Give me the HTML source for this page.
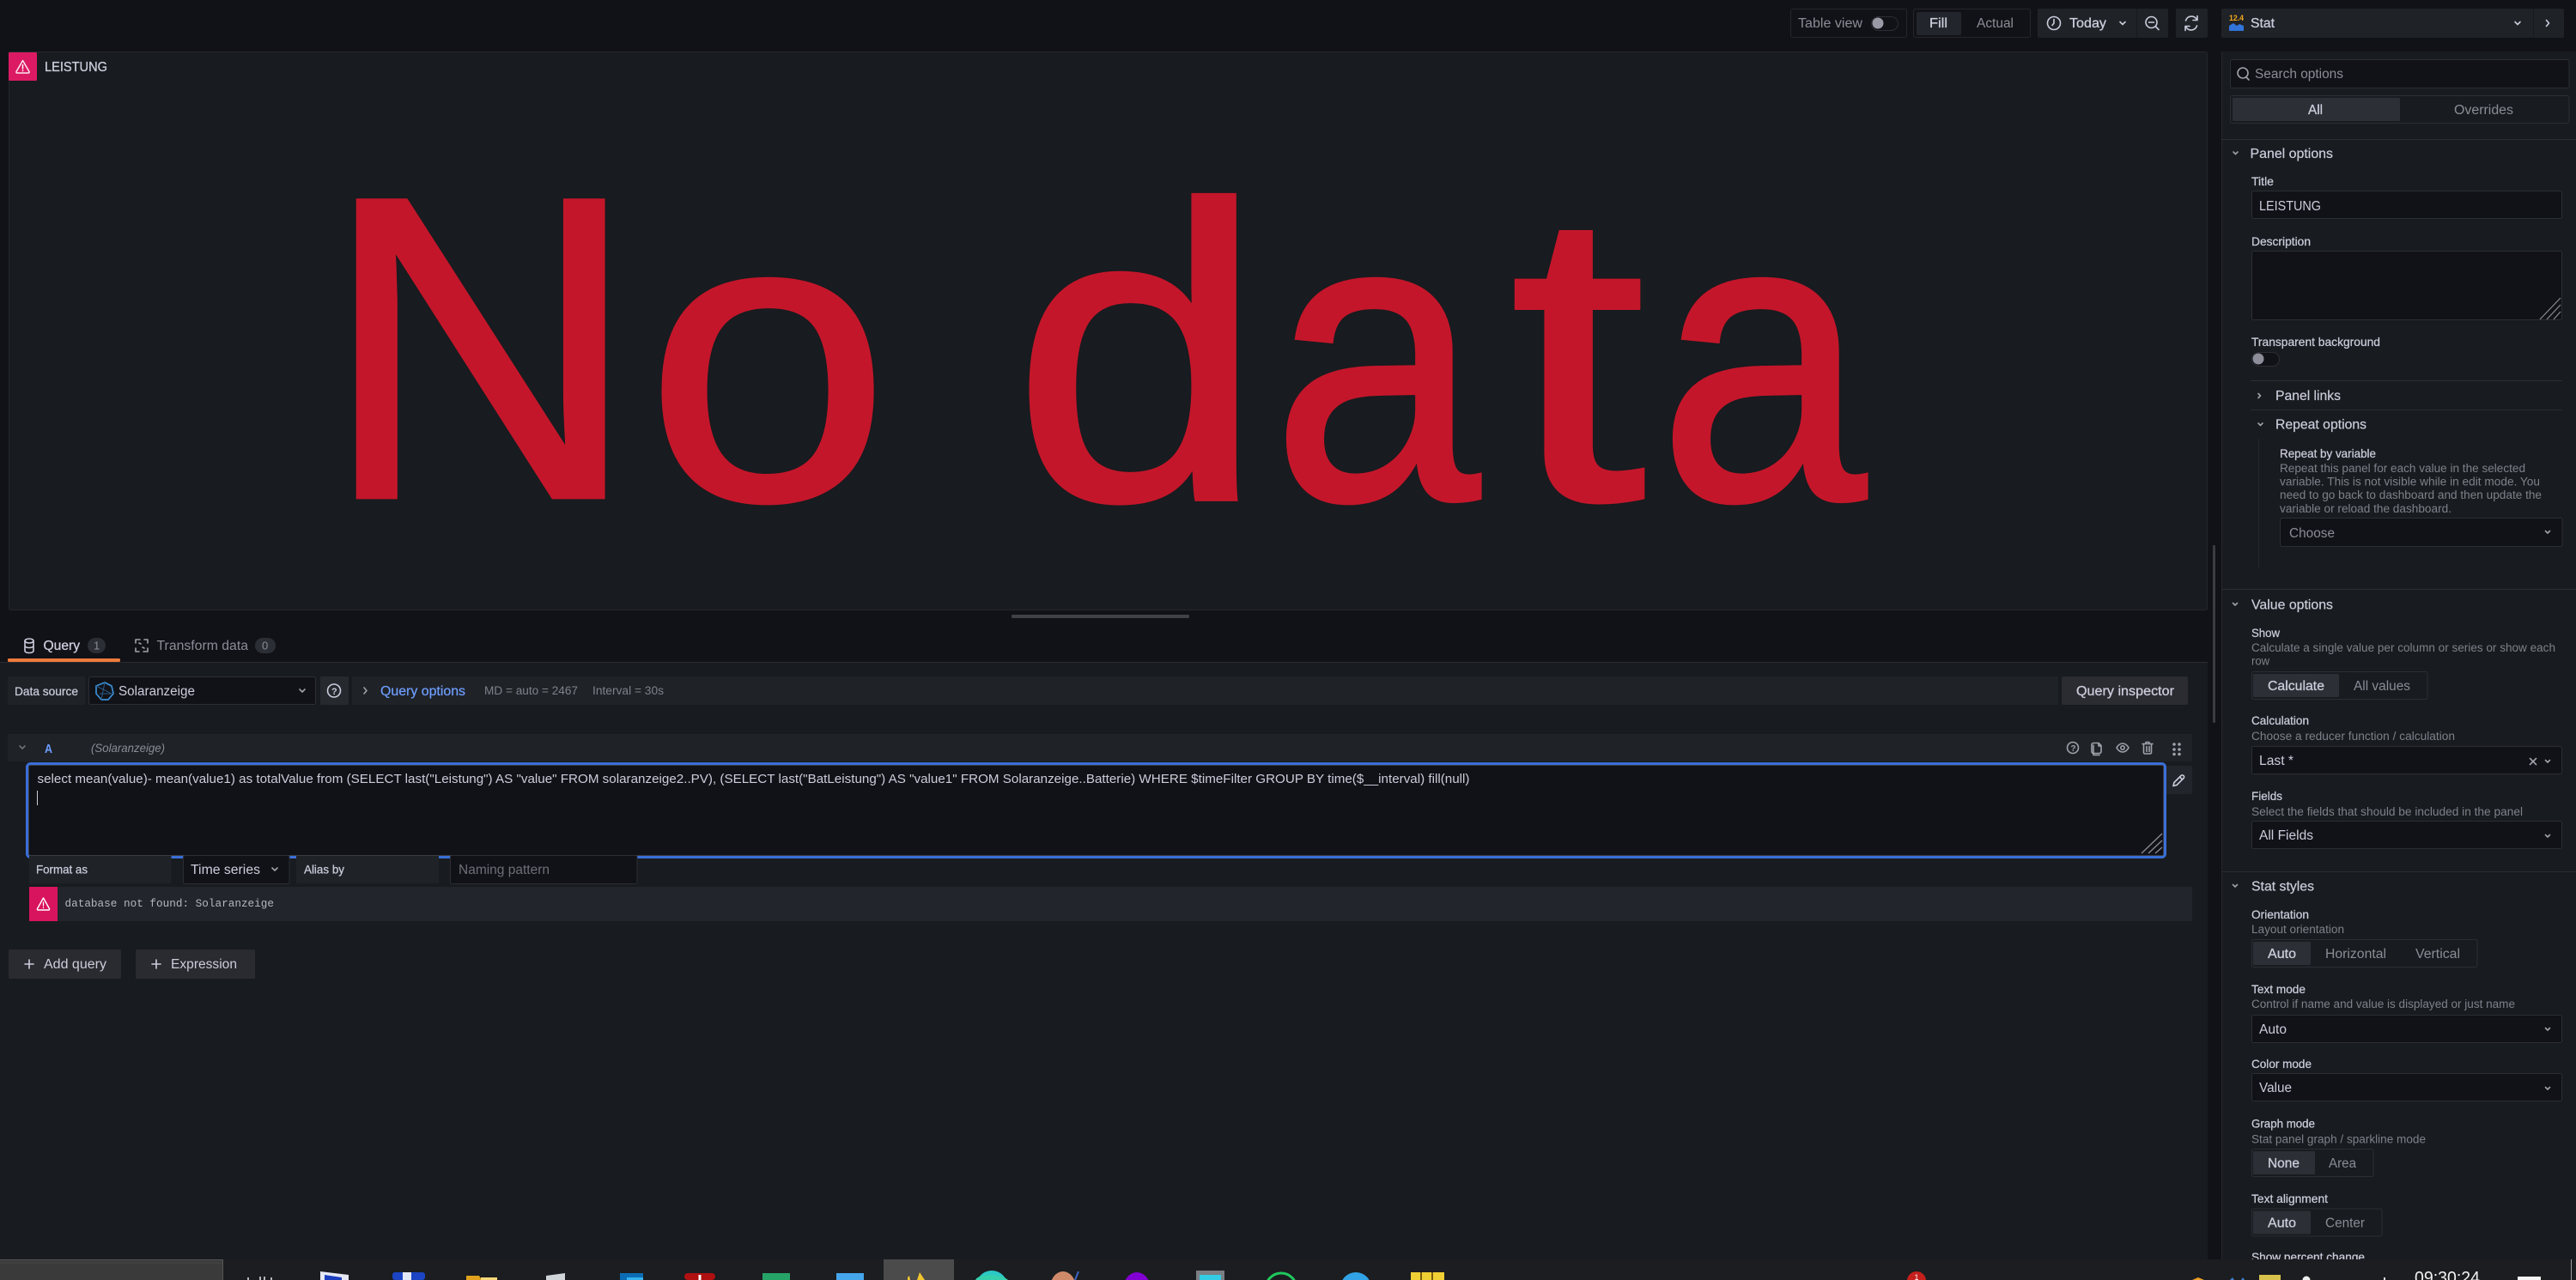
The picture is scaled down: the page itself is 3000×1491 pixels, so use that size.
<!DOCTYPE html>
<html lang="en">
<head>
<meta charset="utf-8">
<title>Edit panel - LEISTUNG</title>
<style>
html,body{margin:0;padding:0;width:3000px;height:1491px;overflow:hidden;background:#111217}
svg{display:block;position:absolute;left:0;top:0}
text{font-family:"Liberation Sans",Arial,sans-serif;fill:#ccccdc;font-size:15.5px;white-space:pre}
.s{fill:#8b8c97}
.l{font-size:14px;fill:#ccccdc;stroke:#ccccdc;stroke-width:.25px}
.d{font-size:13.5px;fill:#7f818b}
.h{font-size:16px;stroke:#ccccdc;stroke-width:.2px}
.b{stroke:#ccccdc;stroke-width:.3px}
.m{font-family:"Liberation Mono",monospace;font-size:12.7px;fill:#b5b6c2}
.i{fill:none;stroke:#ccccdc;stroke-width:1.6;stroke-linecap:round;stroke-linejoin:round}
.g{fill:none;stroke:#a0a1ab;stroke-width:1.6;stroke-linecap:round;stroke-linejoin:round}
.p{fill:#111217;stroke:#2b2e34;stroke-width:1}
.nd{font-size:516px;fill:#c4162a;stroke:#c4162a;stroke-width:6px;stroke-linejoin:miter}
</style>
</head>
<body>
<svg width="3000" height="1491" viewBox="0 0 3000 1491" xmlns="http://www.w3.org/2000/svg">
<rect width="3000" height="1491" fill="#111217"/>

<!-- toolbar -->
<rect x="2085.5" y="10.5" width="135" height="33" rx="2" fill="none" stroke="#24262c"/>
<text x="2094" y="32" class="s" textLength="75" lengthAdjust="spacingAndGlyphs">Table view</text>
<rect x="2179.5" y="19.5" width="31" height="16" rx="8" fill="#111217" stroke="#2b2e34"/>
<circle cx="2187" cy="27" r="6.5" fill="#9a9aa6"/>
<rect x="2228.5" y="10.5" width="136" height="33" rx="2" fill="none" stroke="#24262c"/>
<rect x="2232" y="14" width="52" height="27" rx="2" fill="#22252b"/>
<text x="2247" y="32" class="b" textLength="21" lengthAdjust="spacingAndGlyphs">Fill</text>
<text x="2302" y="32" class="s" textLength="43" lengthAdjust="spacingAndGlyphs">Actual</text>
<rect x="2373" y="10" width="152" height="34" rx="2" fill="#1f2227"/>
<path d="M2488.5 10v34" stroke="#181a1e"/>
<circle cx="2392" cy="27" r="7.5" class="i"/>
<path d="M2392 22.500v4.500l-2 2.500" class="i"/>
<text x="2410" y="32" class="b" textLength="43" lengthAdjust="spacingAndGlyphs">Today</text>
<path d="M2469 25.500l3 3 3-3" class="i"/>
<circle cx="2505.500" cy="26" r="6.500" class="i"/>
<path d="M2502.500 26h6M2510.500 31l3.500 3.500" class="i"/>
<rect x="2534" y="10" width="37" height="34" rx="2" fill="#1f2227"/>
<path d="M2545.500 24a7 7 0 0 1 12-2.500l1.500 1.500M2558.500 30a7 7 0 0 1-12 2.500l-1.500-1.500M2559 18.500v5h-5M2545 35.500v-5h5" class="i"/>
<rect x="2587" y="10" width="399" height="34" rx="2" fill="#1f2227"/>
<path d="M2950.500 10v34" stroke="#181a1e"/>
<text x="2596" y="24" style="font-size:9px;fill:#f2a81d;font-weight:bold" textLength="17" lengthAdjust="spacingAndGlyphs">12.4</text>
<path d="M2596 36v-6l5-3 4 3 3-2 5 2v6z" fill="#3274d9"/>
<text x="2621" y="32" class="b" textLength="28" lengthAdjust="spacingAndGlyphs">Stat</text>
<path d="M2929 25.500l3 3 3-3" class="i"/>
<path d="M2965.500 23.500l3 3.500-3 3.500" class="i"/>

<!-- main panel -->
<rect x="10.500" y="60.500" width="2560" height="650" rx="2" fill="#181b1f" stroke="#24272c"/>
<rect x="10" y="61" width="33" height="33" rx="1" fill="#dc1a63"/>
<path d="M26.500 70.500l-7.500 13a1 1 0 0 0 1 1.500h13a1 1 0 0 0 1-1.500z" fill="none" stroke="#fff" stroke-width="1.500" stroke-linejoin="round" opacity=".9"/>
<path d="M26.500 75.500v4.500M26.500 82v.5" stroke="#fff" stroke-width="1.500" stroke-linecap="round"/>
<text x="52" y="83" class="b" style="font-size:15.500px" textLength="73" lengthAdjust="spacingAndGlyphs">LEISTUNG</text>
<text class="nd" transform="translate(376 578.5) scale(.985 .97)">N</text>
<text class="nd" transform="translate(752 581) scale(.99 .92)">o</text>
<text class="nd" transform="translate(1179.5 581) scale(1.02 .945)">d</text>
<text class="nd" transform="translate(1482 581) scale(.84 .92)">a</text>
<text class="nd" transform="translate(1758.5 581) scale(1.1 .93)">t</text>
<text class="nd" transform="translate(1932 581) scale(.84 .92)">a</text>

<!-- drag handle -->
<rect x="1178" y="716" width="207" height="4" rx="1" fill="#3f4147"/>

<!-- query editor area -->
<rect x="0" y="771" width="2571" height="696" fill="#181b1f"/>
<path d="M0 771.500h2571" stroke="#2a2d33"/>
<rect x="9" y="767" width="131" height="4" rx="1.500" fill="#ee7a3c"/>
<ellipse cx="34" cy="746.500" rx="5" ry="2.500" class="i"/>
<path d="M29 746.500v11.500c0 1.500 2 2.500 5 2.500s5-1 5-2.500v-11.500M29 752c0 1.500 2 2.500 5 2.500s5-1 5-2.500" class="i"/>
<text x="50.500" y="757" class="b" textLength="42.500" lengthAdjust="spacingAndGlyphs">Query</text>
<rect x="102" y="743" width="21" height="18" rx="9" fill="#2b2e34"/>
<text x="109" y="756.500" class="s" style="font-size:13px">1</text>
<path d="M158 749v-4h5M172 749v-4h-4M158 755v4h4M172 755v4h-5M162 749l2 1M168 755l-2-1" class="g"/>
<text x="182.500" y="757" class="s" textLength="106.500" lengthAdjust="spacingAndGlyphs">Transform data</text>
<rect x="297" y="743" width="24" height="18" rx="9" fill="#2b2e34"/>
<text x="305" y="756.500" class="s" style="font-size:13px">0</text>

<rect x="9" y="788" width="90" height="33" fill="#1f2227"/>
<text x="17" y="810" class="l" textLength="74" lengthAdjust="spacingAndGlyphs">Data source</text>
<rect x="103.500" y="788.500" width="264" height="32" rx="2" class="p"/>
<path d="M122 795l8 4 2 9-6 7h-8l-6-7v-9z" fill="none" stroke="#3b8fd6" stroke-width="1.700" stroke-linejoin="round"/>
<path d="M122 795l-4 20M112 799l18 9-14 0" stroke="#2a5a86" fill="none"/>
<text x="138" y="810" textLength="89" lengthAdjust="spacingAndGlyphs">Solaranzeige</text>
<path d="M349 803l3 3 3-3" class="g"/>
<rect x="373" y="788" width="33" height="33" rx="1" fill="#26292e"/>
<circle cx="389" cy="804.500" r="7.500" class="i"/>
<text x="386" y="809" style="font-size:11px;font-weight:bold">?</text>
<rect x="410" y="788" width="1987" height="33" fill="#1f2227"/>
<path d="M424 801l3 3.500-3 3.500" class="g"/>
<text x="443" y="810" style="fill:#6e9fff;stroke:#6e9fff;stroke-width:.2px" textLength="99" lengthAdjust="spacingAndGlyphs">Query options</text>
<text x="564" y="809" class="d" textLength="109" lengthAdjust="spacingAndGlyphs">MD = auto = 2467</text>
<text x="690" y="809" class="d" textLength="83" lengthAdjust="spacingAndGlyphs">Interval = 30s</text>
<rect x="2401" y="788" width="147" height="33" rx="2" fill="#2a2c31"/>
<text x="2418" y="810" class="b" textLength="114" lengthAdjust="spacingAndGlyphs">Query inspector</text>

<!-- query row -->
<rect x="9" y="855" width="2544" height="32" fill="#1f2227"/>
<path d="M23 869l3 3 3-3" class="g" style="stroke:#6f7079"/>
<text x="52" y="877" style="fill:#6e9fff;font-weight:bold;font-size:15px" textLength="9" lengthAdjust="spacingAndGlyphs">A</text>
<text x="106" y="876" class="s" style="font-style:italic;font-size:14px" textLength="86" lengthAdjust="spacingAndGlyphs">(Solaranzeige)</text>
<circle cx="2414" cy="871" r="6.500" class="g"/>
<text x="2411.500" y="875" style="font-size:10px;fill:#a0a1ab;font-weight:bold">?</text>
<path d="M2444 865.500h-6a2 2 0 0 0-2 2v8a2 2 0 0 0 2 2h7a2 2 0 0 0 2-2v-7zM2444 865.500v3.500h3" class="g"/>
<path d="M2438 868v11.500h7" class="g"/>
<path d="M2465 871c2-3.500 4.500-5 7-5s5 1.500 7 5c-2 3.500-4.500 5-7 5s-5-1.500-7-5z" class="g"/>
<circle cx="2472" cy="871" r="2.200" class="g"/>
<path d="M2495 866.500h12M2499 866.500v-2h4v2M2496.500 866.500v10a1.500 1.500 0 0 0 1.500 1.500h6a1.500 1.500 0 0 0 1.500-1.500v-10M2500 869.500v6M2503 869.500v6" class="g"/>
<g fill="#a0a1ab"><circle cx="2532" cy="867" r="1.800"/><circle cx="2538" cy="867" r="1.800"/><circle cx="2532" cy="873" r="1.800"/><circle cx="2538" cy="873" r="1.800"/><circle cx="2532" cy="878.500" r="1.800"/><circle cx="2538" cy="878.500" r="1.800"/></g>

<!-- query textarea -->
<rect x="2515" y="892" width="38" height="33" rx="2" fill="#22252b"/>
<path d="M2531 915.500l1-4 8-8a2 2 0 0 1 3 3l-8 8zM2538.500 905l3 3" class="i"/>
<rect x="31.500" y="889.500" width="2490" height="109" rx="4" fill="#111217" stroke="#3a6fd8" stroke-width="3"/>
<rect x="33.500" y="891.500" width="2486" height="105" rx="2" fill="none" stroke="#3a3c42"/>
<text x="43.500" y="912" style="font-size:15px" textLength="1668" lengthAdjust="spacingAndGlyphs">select mean(value)- mean(value1) as totalValue from (SELECT last("Leistung") AS "value" FROM solaranzeige2..PV), (SELECT last("BatLeistung") AS "value1" FROM Solaranzeige..Batterie) WHERE $timeFilter GROUP BY time($__interval) fill(null)</text>
<path d="M43.500 921v17" stroke="#ccccdc" stroke-width="1"/>
<path d="M2494 994l24-23M2502 994l16-15M2510 994l8-7" stroke="#8a8b93" stroke-width="1.300"/>

<rect x="34" y="997" width="165.500" height="32" fill="#1f2227"/>
<text x="42" y="1017.500" class="l" textLength="60" lengthAdjust="spacingAndGlyphs">Format as</text>
<rect x="213.500" y="996.500" width="123.500" height="33" rx="2" class="p"/>
<text x="222" y="1018" textLength="81" lengthAdjust="spacingAndGlyphs">Time series</text>
<path d="M317 1011l3 3 3-3" class="g"/>
<rect x="345" y="997" width="166" height="32" fill="#1f2227"/>
<text x="354" y="1017.500" class="l" textLength="47" lengthAdjust="spacingAndGlyphs">Alias by</text>
<rect x="524.500" y="996.500" width="217.500" height="33" rx="2" class="p"/>
<text x="534" y="1018" class="s" style="fill:#6e6f79" textLength="106" lengthAdjust="spacingAndGlyphs">Naming pattern</text>

<rect x="34" y="1033" width="2519" height="40" fill="#22252b"/>
<rect x="34" y="1033" width="33" height="40" fill="#d9145f"/>
<path d="M50.500 1046l-7 12.500a1 1 0 0 0 1 1.500h12a1 1 0 0 0 1-1.500z" fill="none" stroke="#fff" stroke-width="1.400" stroke-linejoin="round"/>
<path d="M50.500 1051v4M50.500 1057v.5" stroke="#fff" stroke-width="1.300" stroke-linecap="round"/>
<text x="75.500" y="1056" class="m" textLength="243.500" lengthAdjust="spacingAndGlyphs">database not found: Solaranzeige</text>

<rect x="10" y="1106" width="131" height="34" rx="2" fill="#292b30"/>
<path d="M29 1123h10M34 1118v10" class="i"/>
<text x="51" y="1128" textLength="73" lengthAdjust="spacingAndGlyphs">Add query</text>
<rect x="158" y="1106" width="139" height="34" rx="2" fill="#292b30"/>
<path d="M177 1123h10M182 1118v10" class="i"/>
<text x="199" y="1128" textLength="77" lengthAdjust="spacingAndGlyphs">Expression</text>

<!-- scrollbar -->
<rect x="2577" y="635" width="3" height="207" rx="1" fill="#3a3c42"/>

<!-- options pane -->
<rect x="2587" y="60" width="413" height="1407" fill="#181b1f"/>
<path d="M2587.500 60v1407" stroke="#24272c"/>
<rect x="2597.500" y="69.500" width="394.500" height="33" rx="2" class="p"/>
<circle cx="2612" cy="85" r="6" class="g"/>
<path d="M2616 90l3 3" class="g"/>
<text x="2626" y="91" class="s" textLength="103" lengthAdjust="spacingAndGlyphs">Search options</text>
<rect x="2597.500" y="111.500" width="394.500" height="32" rx="2" fill="#181b1f" stroke="#2b2e34"/>
<rect x="2600" y="114" width="195" height="27" rx="1" fill="#2c2f35"/>
<text x="2688" y="133" class="b" textLength="17" lengthAdjust="spacingAndGlyphs">All</text>
<text x="2858" y="133" class="s" textLength="69" lengthAdjust="spacingAndGlyphs">Overrides</text>
<path d="M2587 162.500h413M2587 686.500h413M2587 1015.500h413" stroke="#2a2d33"/>

<path d="M2601 177l2.500 2.500 2.500-2.500" class="g"/>
<text x="2620.500" y="184" class="h" textLength="96.500" lengthAdjust="spacingAndGlyphs">Panel options</text>
<text x="2622" y="216" class="l" textLength="26" lengthAdjust="spacingAndGlyphs">Title</text>
<rect x="2622.500" y="222.500" width="361" height="32" rx="2" class="p"/>
<text x="2631" y="245" textLength="72" lengthAdjust="spacingAndGlyphs">LEISTUNG</text>
<text x="2622" y="286" class="l" textLength="69" lengthAdjust="spacingAndGlyphs">Description</text>
<rect x="2622.500" y="292.500" width="361" height="80" rx="2" class="p"/>
<path d="M2958 372l24-25M2966 372l16-17M2974 372l8-9" stroke="#8a8b93" stroke-width="1.200"/>
<text x="2622" y="403" class="l" textLength="150" lengthAdjust="spacingAndGlyphs">Transparent background</text>
<rect x="2622.500" y="410.500" width="32" height="16" rx="8" fill="#111217" stroke="#2b2e34"/>
<circle cx="2630" cy="418" r="6.500" fill="#8d8e99"/>
<path d="M2621 443.500h363M2621 477.500h363" stroke="#2a2d33"/>
<path d="M2630 458.500l2.500 2.500-2.500 2.500" class="g"/>
<text x="2650" y="466" class="h" textLength="76" lengthAdjust="spacingAndGlyphs">Panel links</text>
<path d="M2630 493l2.500 2.500 2.500-2.500" class="g"/>
<text x="2650" y="499.500" class="h" textLength="106" lengthAdjust="spacingAndGlyphs">Repeat options</text>
<path d="M2630.500 511v151" stroke="#24272c"/>
<text x="2655" y="533" class="l" textLength="112" lengthAdjust="spacingAndGlyphs">Repeat by variable</text>
<text x="2655" y="550" class="d" textLength="286" lengthAdjust="spacingAndGlyphs">Repeat this panel for each value in the selected</text>
<text x="2655" y="565.500" class="d" textLength="303" lengthAdjust="spacingAndGlyphs">variable. This is not visible while in edit mode. You</text>
<text x="2655" y="581" class="d" textLength="305" lengthAdjust="spacingAndGlyphs">need to go back to dashboard and then update the</text>
<text x="2655" y="597" class="d" textLength="200" lengthAdjust="spacingAndGlyphs">variable or reload the dashboard.</text>
<rect x="2655.500" y="603.500" width="328.500" height="33" rx="2" class="p"/>
<text x="2666" y="626" class="s" textLength="53" lengthAdjust="spacingAndGlyphs">Choose</text>
<path d="M2964.500 618.500l2.500 2.500 2.500-2.500" class="g"/>

<path d="M2600.500 702.500l2.500 2.500 2.500-2.500" class="g"/>
<text x="2622" y="709.500" class="h" textLength="95" lengthAdjust="spacingAndGlyphs">Value options</text>
<text x="2622" y="742" class="l" textLength="33" lengthAdjust="spacingAndGlyphs">Show</text>
<text x="2622" y="759" class="d" textLength="354" lengthAdjust="spacingAndGlyphs">Calculate a single value per column or series or show each</text>
<text x="2622" y="774.500" class="d" textLength="21" lengthAdjust="spacingAndGlyphs">row</text>
<rect x="2622.500" y="782.500" width="204.500" height="32" rx="2" fill="#181b1f" stroke="#2b2e34"/>
<rect x="2624" y="785" width="100" height="27" rx="1" fill="#2c2f35"/>
<text x="2641" y="804" class="b" textLength="66" lengthAdjust="spacingAndGlyphs">Calculate</text>
<text x="2741" y="804" class="s" textLength="66" lengthAdjust="spacingAndGlyphs">All values</text>
<text x="2622" y="844" class="l" textLength="67" lengthAdjust="spacingAndGlyphs">Calculation</text>
<text x="2622" y="862" class="d" textLength="237" lengthAdjust="spacingAndGlyphs">Choose a reducer function / calculation</text>
<rect x="2622.500" y="869.500" width="361" height="32" rx="2" class="p"/>
<text x="2631" y="891" textLength="40" lengthAdjust="spacingAndGlyphs">Last *</text>
<path d="M2946.500 883.500l7 7M2953.500 883.500l-7 7" class="g"/>
<path d="M2964.500 885.500l2.500 2.500 2.500-2.500" class="g"/>
<text x="2622" y="932" class="l" textLength="36" lengthAdjust="spacingAndGlyphs">Fields</text>
<text x="2622" y="950" class="d" textLength="316" lengthAdjust="spacingAndGlyphs">Select the fields that should be included in the panel</text>
<rect x="2622.500" y="956.500" width="361" height="32" rx="2" class="p"/>
<text x="2631" y="978" textLength="63" lengthAdjust="spacingAndGlyphs">All Fields</text>
<path d="M2964.500 972.500l2.500 2.500 2.500-2.500" class="g"/>

<path d="M2600.500 1030.500l2.500 2.500 2.500-2.500" class="g"/>
<text x="2622" y="1037.500" class="h" textLength="73" lengthAdjust="spacingAndGlyphs">Stat styles</text>
<text x="2622" y="1070" class="l" textLength="67" lengthAdjust="spacingAndGlyphs">Orientation</text>
<text x="2622" y="1087" class="d" textLength="108" lengthAdjust="spacingAndGlyphs">Layout orientation</text>
<rect x="2622.500" y="1094.500" width="262.500" height="32" rx="2" fill="#181b1f" stroke="#2b2e34"/>
<rect x="2624" y="1097" width="67" height="27" rx="1" fill="#2c2f35"/>
<text x="2641" y="1116" class="b" textLength="33" lengthAdjust="spacingAndGlyphs">Auto</text>
<text x="2708" y="1116" class="s" textLength="71" lengthAdjust="spacingAndGlyphs">Horizontal</text>
<text x="2813" y="1116" class="s" textLength="52" lengthAdjust="spacingAndGlyphs">Vertical</text>
<text x="2622" y="1157" class="l" textLength="63" lengthAdjust="spacingAndGlyphs">Text mode</text>
<text x="2622" y="1174" class="d" textLength="307" lengthAdjust="spacingAndGlyphs">Control if name and value is displayed or just name</text>
<rect x="2622.500" y="1182.500" width="361" height="32" rx="2" class="p"/>
<text x="2631" y="1204" textLength="32" lengthAdjust="spacingAndGlyphs">Auto</text>
<path d="M2964.500 1197.500l2.500 2.500 2.500-2.500" class="g"/>
<text x="2622" y="1244" class="l" textLength="70" lengthAdjust="spacingAndGlyphs">Color mode</text>
<rect x="2622.500" y="1250.500" width="361" height="32" rx="2" class="p"/>
<text x="2631" y="1272" textLength="38" lengthAdjust="spacingAndGlyphs">Value</text>
<path d="M2964.500 1266.500l2.500 2.500 2.500-2.500" class="g"/>
<text x="2622" y="1313.500" class="l" textLength="74" lengthAdjust="spacingAndGlyphs">Graph mode</text>
<text x="2622" y="1331.500" class="d" textLength="203" lengthAdjust="spacingAndGlyphs">Stat panel graph / sparkline mode</text>
<rect x="2622.500" y="1338.500" width="141.500" height="32" rx="2" fill="#181b1f" stroke="#2b2e34"/>
<rect x="2624" y="1341" width="72" height="27" rx="1" fill="#2c2f35"/>
<text x="2641" y="1360" class="b" textLength="37" lengthAdjust="spacingAndGlyphs">None</text>
<text x="2712" y="1360" class="s" textLength="32" lengthAdjust="spacingAndGlyphs">Area</text>
<text x="2622" y="1401" class="l" textLength="89" lengthAdjust="spacingAndGlyphs">Text alignment</text>
<rect x="2622.500" y="1408" width="151.500" height="32" rx="2" fill="#181b1f" stroke="#2b2e34"/>
<rect x="2624" y="1410.500" width="67" height="27" rx="1" fill="#2c2f35"/>
<text x="2641" y="1429.500" class="b" textLength="33" lengthAdjust="spacingAndGlyphs">Auto</text>
<text x="2708" y="1429.500" class="s" textLength="46" lengthAdjust="spacingAndGlyphs">Center</text>
<text x="2622" y="1469" class="l" textLength="132" lengthAdjust="spacingAndGlyphs">Show percent change</text>

<!-- taskbar -->
<rect x="0" y="1467" width="3000" height="24" fill="#1b1d20"/>
<rect x="0" y="1467" width="260" height="24" fill="#3a3a3a"/>
<path d="M0 1467.500h260M259.500 1467v24" stroke="#565656"/>
<path d="M0 1471h258" stroke="#484848"/>
<rect x="1029" y="1467" width="82" height="24" fill="#4b4b4b"/>
<path d="M289 1491v-3M303 1491v-4M308 1491v-4M316 1491v-3" stroke="#e8e8e8" stroke-width="1.500"/>
<path d="M373 1481l33 4v6h-33z" fill="#e6e9f4"/>
<path d="M378 1485l20 3v3h-20z" fill="#1b3fbf"/>
<rect x="457" y="1482" width="38" height="9" rx="3" fill="#1b45c4"/>
<rect x="469" y="1482" width="10" height="9" fill="#e3e8f6"/>
<path d="M543 1486h15l3 5h-18z" fill="#e0a11c"/>
<rect x="560" y="1488" width="19" height="3" fill="#f7d97a"/>
<path d="M636 1491v-5l22-3v8z" fill="#cfd5d9"/>
<rect x="722" y="1483" width="27" height="8" fill="#0b6cb5"/>
<rect x="730" y="1488" width="19" height="3" fill="#36b2ee"/>
<rect x="797" y="1483" width="36" height="8" rx="4" fill="#b01010"/>
<path d="M815 1485v6" stroke="#fff" stroke-width="3"/>
<rect x="888" y="1483" width="32" height="8" fill="#26a367"/>
<rect x="974" y="1483" width="32" height="8" fill="#45a6ec"/>
<path d="M1057 1491v-3l2-2 1 5zM1068 1491l3-9 6 9z" fill="#f0c62c"/>
<ellipse cx="1155" cy="1500" rx="19" ry="20" fill="#2bc8c8"/>
<path d="M1136 1491c3-8 30-8 38 0z" fill="#36d0ae"/>
<ellipse cx="1238" cy="1500" rx="15" ry="19" fill="#d08a6a"/>
<path d="M1256 1481l-4 10" stroke="#3f64c8" stroke-width="2"/>
<ellipse cx="1324" cy="1502" rx="16" ry="20" fill="#8300d4"/>
<rect x="1393" y="1480" width="33" height="11" fill="#7b7e84"/>
<rect x="1397" y="1485" width="25" height="6" fill="#32cce4"/>
<circle cx="1492" cy="1501" r="18" fill="none" stroke="#1fc95d" stroke-width="3"/>
<circle cx="1579" cy="1500" r="18" fill="#31a3e6"/>
<rect x="1643" y="1482" width="39" height="9" fill="#f0cf35"/>
<path d="M1655 1482v9M1668 1482v9" stroke="#7a5e10" stroke-width="2"/>
<circle cx="2232" cy="1492" r="11" fill="#c5201c"/>
<text x="2229.500" y="1491" style="font-size:9px;fill:#fff">1</text>
<path d="M2553 1491l7-3 7 3z" fill="#f0a226"/>
<path d="M2597 1491l3-3 2 3zM2610 1491l2-3 2 3z" fill="#3f7fd0"/>
<rect x="2631" y="1485" width="25" height="6" fill="#d8c24c"/>
<circle cx="2686" cy="1491" r="4.500" fill="#eee"/>
<path d="M2777 1491v-3" stroke="#ddd" stroke-width="2"/>
<text x="2812" y="1495" style="font-size:20px;fill:#f2f2f2" textLength="76" lengthAdjust="spacingAndGlyphs">09:30:24</text>
<rect x="2932" y="1487" width="27" height="4" fill="#f5f5f5"/>
<path d="M2994.500 1467v24" stroke="#9a9a9a"/>
</svg>
</body>
</html>
